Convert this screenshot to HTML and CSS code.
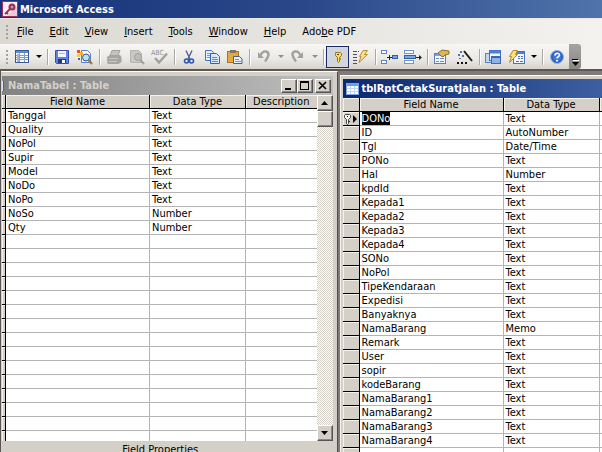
FILE: index.html
```html
<!DOCTYPE html>
<html lang="en">

<head>
    <meta charset="UTF-8">
    <meta name="viewport" content="width=device-width, initial-scale=1.0">
    <title>Microsoft Access</title>
    <link rel="stylesheet" href="styles.css">
</head>

<body>

    <header class="titlebar">
        <svg class="app-icon" width="16" height="16" viewBox="0 0 16 16">
            <rect x="0.5" y="0.5" width="15" height="15" fill="#f0c8d8" stroke="#a03060" />
            <path d="M1 1h14v4L5 15H1z" fill="#fff" opacity=".7" />
            <circle cx="10" cy="6" r="2.500" fill="#c890a8" stroke="#9c2c54" stroke-width="2" />
            <path d="M8 8l-5 5M4.500 11.500l1.500 1.500" stroke="#9c2c54" stroke-width="1.800" />
        </svg>
        <h1>Microsoft Access</h1>
    </header>

    <nav class="menubar">
        <span class="grip"></span>
        <button type="button"><u>F</u>ile</button>
        <button type="button"><u>E</u>dit</button>
        <button type="button"><u>V</u>iew</button>
        <button type="button"><u>I</u>nsert</button>
        <button type="button"><u>T</u>ools</button>
        <button type="button"><u>W</u>indow</button>
        <button type="button"><u>H</u>elp</button>
        <button type="button">Ado<u>b</u>e PDF</button>
    </nav>

    <div class="toolbar-row">
        <div class="toolbar">
            <span class="grip"></span>
            <button type="button" class="tool" aria-label="View">
                <svg width="16" height="16" viewBox="0 0 16 16">
                    <rect x="1.500" y="1.500" width="13" height="12" fill="#fff" stroke="#3a5a94" />
                    <path d="M2 2h12v2H2z" fill="#5f8ad0" />
                    <path d="M2 6.500h12M2 8.500h12M2 10.500h12M5.500 4v9M10.500 4v9" stroke="#7d9cc8" />
                    <path d="M3 5h2v8H3z" fill="#9db6da" />
                </svg>
            </button>
            <button type="button" class="drop" aria-label="View list"></button>
            <span class="sep"></span>
            <button type="button" class="tool" aria-label="Save">
                <svg width="16" height="16" viewBox="0 0 16 16">
                    <path d="M1.500 1.500h13v13h-12l-1-1z" fill="#5f82e4" stroke="#3a4eae" />
                    <rect x="4" y="2" width="8" height="6" fill="#f4f7ff" />
                    <path d="M5 4.500h6" stroke="#a9b9e0" />
                    <rect x="4" y="10" width="8" height="4" fill="#25347c" />
                    <rect x="8" y="11" width="3" height="3" fill="#fff" />
                </svg>
            </button>
            <button type="button" class="tool" aria-label="File Search">
                <svg width="17" height="16" viewBox="0 0 17 16">
                    <path d="M5.500 1.500h6l3 3v9h-9z" fill="#f4f8ff" stroke="#5b82c4" />
                    <path d="M1 1h3v3H1z" fill="#e0522c" />
                    <path d="M4 3h3v3H4z" fill="#f0b428" />
                    <path d="M1 5h3v3H1z" fill="#f0d040" />
                    <path d="M2 9h2v2H2z" fill="#3b62c0" />
                    <circle cx="10" cy="8.500" r="3.500" fill="#b9e0f4" stroke="#34558c" />
                    <path d="M12.500 11l3.500 4" stroke="#a8702c" stroke-width="2" />
                </svg>
            </button>
            <span class="sep"></span>
            <button type="button" class="tool" aria-label="Print" disabled>
                <svg width="16" height="16" viewBox="0 0 16 16">
                    <path d="M6 1.500h8l-2 5H4z" fill="#c4c3bf" stroke="#a4a3a0" />
                    <path d="M1 8l3-2h10l1.500 2v5l-3 2H1.500z" fill="#a6a5a2" />
                    <path d="M3 9.500h9M3 12.500h8" stroke="#c8c7c3" />
                </svg>
            </button>
            <button type="button" class="tool" aria-label="Print Preview" disabled>
                <svg width="16" height="16" viewBox="0 0 16 16">
                    <path d="M1.500 1.500h8l3 3v9h-11z" fill="#c9c8c5" stroke="#b4b3b0" />
                    <circle cx="9" cy="8" r="3.500" fill="#bdbcb9" stroke="#a2a19e" />
                    <path d="M11.500 11l3.500 4" stroke="#a2a19e" stroke-width="2" />
                </svg>
            </button>
            <button type="button" class="tool" aria-label="Spelling" disabled>
                <svg width="18" height="16" viewBox="0 0 18 16">
                    <text x="0" y="6" class="abc">ABC</text>
                    <path d="M4 9l4 4.500 8-9" fill="none" stroke="#a09f9c" stroke-width="2.400" />
                </svg>
            </button>
            <span class="sep"></span>
            <button type="button" class="tool" aria-label="Cut">
                <svg width="16" height="16" viewBox="0 0 16 16">
                    <path d="M5 1.500l4 8.500M11 1.500L7 10" stroke="#4c6498" stroke-width="1.400" />
                    <circle cx="5.500" cy="12" r="2" fill="none" stroke="#2d56b4" stroke-width="1.600" />
                    <circle cx="10.500" cy="12" r="2" fill="none" stroke="#2d56b4" stroke-width="1.600" />
                </svg>
            </button>
            <button type="button" class="tool" aria-label="Copy">
                <svg width="16" height="16" viewBox="0 0 16 16">
                    <path d="M1.500 1.500h6l2 2v8h-8z" fill="#e6f0ff" stroke="#4474c4" />
                    <path d="M3 4.500h4M3 6.500h3M3 8.500h3" stroke="#6d9ade" />
                    <path d="M6.500 4.500h6l3 3v7h-9z" fill="#dbe9ff" stroke="#3262b4" />
                    <path d="M8 8.500h5M8 10.500h6M8 12.500h6" stroke="#5b8ad6" />
                </svg>
            </button>
            <button type="button" class="tool" aria-label="Paste">
                <svg width="17" height="16" viewBox="0 0 17 16">
                    <rect x="1.500" y="2.500" width="11" height="11" fill="#e2ab42" stroke="#a87420" />
                    <path d="M4 1h6v3H4z" fill="#7d7763" />
                    <path d="M7.500 7.500h6l2.500 2.500v4.500H7.500z" fill="#e9f1ff" stroke="#4a5f88" />
                    <path d="M9 10.500h4M9 12.500h6" stroke="#7797c8" />
                </svg>
            </button>
            <span class="sep"></span>
            <button type="button" class="tool" aria-label="Undo" disabled>
                <svg width="16" height="16" viewBox="0 0 16 16">
                    <path d="M4 7c2-4 4-5 6-4.500 4 1 3 5-1 10" fill="none" stroke="#a2a19e" stroke-width="2.400" />
                    <path d="M2 3v6h6z" fill="#a2a19e" />
                </svg>
            </button>
            <button type="button" class="drop" aria-label="Undo list" disabled></button>
            <button type="button" class="tool" aria-label="Redo" disabled>
                <svg width="16" height="16" viewBox="0 0 16 16">
                    <path d="M11 7c-2-4-4-5-6-4.500-4 1-3 5 1 10" fill="none" stroke="#a2a19e" stroke-width="2.400" />
                    <path d="M13 3v6H7z" fill="#a2a19e" />
                </svg>
            </button>
            <button type="button" class="drop" aria-label="Redo list" disabled></button>
            <span class="sep"></span>
            <button type="button" class="tool pressed" aria-label="Primary Key" aria-pressed="true">
                <svg width="16" height="16" viewBox="0 0 16 16">
                    <path d="M5.500 3.500h5l1 1v2l-2 2v1h1v1h-1v2l-1 1-1-1v-4l-2-2v-2z" fill="#f8dc60" stroke="#94742c" />
                    <path d="M7 5h2v1H7z" fill="#5d4410" />
                </svg>
            </button>
            <button type="button" class="tool" aria-label="Indexes">
                <svg width="17" height="16" viewBox="0 0 17 16">
                    <path d="M1 2.500h6M1 5.500h5M1 8.500h5M1 11.500h5M1 14.500h4" stroke="#4f4d6c" stroke-dasharray="4 1" />
                    <path d="M11 1.500h4.500l-3 4h3L7 13.500l2-6H7.500z" fill="#fbe08a" stroke="#b98f38" />
                </svg>
            </button>
            <span class="sep"></span>
            <button type="button" class="tool" aria-label="Insert Rows">
                <svg width="17" height="16" viewBox="0 0 17 16">
                    <rect x="0.500" y="1.500" width="5" height="3" fill="#fff" stroke="#5c86c8" />
                    <rect x="0.500" y="11.500" width="5" height="3" fill="#fff" stroke="#5c86c8" />
                    <rect x="11.500" y="6.500" width="5" height="3" fill="#7ba6e4" stroke="#345ea8" />
                    <path d="M6 8.500h5M8.500 6v5" stroke="#222" />
                </svg>
            </button>
            <button type="button" class="tool" aria-label="Delete Rows">
                <svg width="18" height="16" viewBox="0 0 18 16">
                    <rect x="0.500" y="1.500" width="9" height="3" fill="#fff" stroke="#6e96d0" />
                    <rect x="0.500" y="6.500" width="11" height="3" fill="#7ba6e4" stroke="#345ea8" />
                    <rect x="0.500" y="11.500" width="9" height="3" fill="#fff" stroke="#6e96d0" />
                    <path d="M12 8.500h5" stroke="#222" />
                    <path d="M15 6l3 2.500-3 2.500z" fill="#222" />
                </svg>
            </button>
            <span class="sep"></span>
            <button type="button" class="tool" aria-label="Properties">
                <svg width="17" height="16" viewBox="0 0 17 16">
                    <rect x="1.500" y="4.500" width="11" height="10" fill="#f2f7ff" stroke="#5a80bc" />
                    <path d="M2 6h10" stroke="#7ba2dd" stroke-width="2" />
                    <path d="M3 9.500h3M7 9.500h4M3 12.500h3M7 12.500h4" stroke="#6b8dc4" />
                    <path d="M5 4l4-3 7 1v3l-4 1-2 2-2-1z" fill="#dcb94e" stroke="#8c7030" />
                </svg>
            </button>
            <button type="button" class="tool" aria-label="Build">
                <svg width="18" height="16" viewBox="0 0 18 16">
                    <path d="M8 2l8 10" stroke="#1c1c1c" stroke-width="2" />
                    <path d="M4 2h2v2H4zM2 5h2v2H2zM6 6h2v2H6zM3 9h2v1H3z" fill="#5b74a8" />
                    <path d="M1 13h2v2H1zM5 13h2v2H5zM9 13h2v2H9z" fill="#111" />
                </svg>
            </button>
            <span class="sep"></span>
            <button type="button" class="tool" aria-label="Database Window">
                <svg width="17" height="16" viewBox="0 0 17 16">
                    <rect x="0.500" y="4.500" width="10" height="9" fill="#bed6f6" stroke="#5a86c8" />
                    <rect x="4.500" y="1.500" width="11" height="10" fill="#eef5ff" stroke="#4574bc" />
                    <path d="M5 3h10" stroke="#4c80d4" stroke-width="3" />
                    <rect x="6.500" y="7.500" width="9" height="7" fill="#8fb3e8" stroke="#3e69b0" />
                    <path d="M7 8.500h8" stroke="#2f60b8" />
                </svg>
            </button>
            <button type="button" class="tool" aria-label="New Object">
                <svg width="18" height="16" viewBox="0 0 18 16">
                    <rect x="5.500" y="2.500" width="11" height="12" fill="#f2f7ff" stroke="#4e74b4" />
                    <path d="M6 4h10" stroke="#4c80d4" stroke-width="2" />
                    <path d="M10 7.500h2M13 7.500h2M10 9.500h2M13 9.500h2M8 12.500h3M12 12.500h3" stroke="#5078b8" />
                    <path d="M5 1.500h4.500l-2 4h2L1.500 13.500l2-6H1.500z" fill="#fbe07c" stroke="#b08a30" />
                </svg>
            </button>
            <button type="button" class="drop" aria-label="New Object list"></button>
            <span class="sep"></span>
            <button type="button" class="tool" aria-label="Help">
                <svg width="16" height="16" viewBox="0 0 16 16">
                    <circle cx="8" cy="8" r="6.500" fill="#3f78dc" stroke="#90aede" />
                    <circle cx="8" cy="8" r="5" fill="none" stroke="#2552ac" />
                    <path d="M6 6.500c0-3 4.500-3 4.500-.5C10.500 8 8 7.500 8 9.500" fill="none" stroke="#fff" stroke-width="1.600" />
                    <path d="M7 11h2v1.500H7z" fill="#fff" />
                </svg>
            </button>
            <button type="button" class="more" aria-label="Toolbar Options">
                <svg width="8" height="8" viewBox="0 0 8 8">
                    <path d="M1 1h6v1H1z" fill="#000" />
                    <path d="M1 4h7L4.500 8z" fill="#000" />
                    <path d="M2 2.500h6" stroke="#fff" />
                </svg>
            </button>
        </div>
    </div>

    <main class="workspace">

        <section class="window window-left">
            <div class="caption">
                <span class="icon-edge"></span>
                <h2>NamaTabel : Table</h2>
                <div class="caption-buttons">
                    <button type="button" aria-label="Minimize">
                        <svg width="10" height="10" viewBox="0 0 10 10"><path d="M1 7h6v2H1z" /></svg>
                    </button>
                    <button type="button" aria-label="Maximize">
                        <svg width="10" height="10" viewBox="0 0 10 10"><path d="M0 0h9v9H0zM1 2v6h7V2z" fill-rule="evenodd" /></svg>
                    </button>
                    <button type="button" class="close" aria-label="Close">
                        <svg width="10" height="10" viewBox="0 0 10 10"><path d="M1 1l7 7M8 1L1 8" stroke="#000" stroke-width="1.600" /></svg>
                    </button>
                </div>
            </div>
            <div class="sheet">
                <div class="grid-area">
                    <table>
                        <colgroup>
                            <col class="col-edge">
                            <col class="col-field">
                            <col class="col-type">
                            <col>
                        </colgroup>
                        <thead>
                            <tr>
                                <th></th>
                                <th>Field Name</th>
                                <th>Data Type</th>
                                <th>Description</th>
                            </tr>
                        </thead>
                        <tbody id="leftRows"></tbody>
                    </table>
                </div>
                <div class="scrollbar">
                    <button type="button" aria-label="Scroll up">
                        <svg width="7" height="4" viewBox="0 0 7 4"><path d="M0 4h7L3.500 0z" /></svg>
                    </button>
                    <div class="thumb"></div>
                    <button type="button" class="down" aria-label="Scroll down">
                        <svg width="7" height="4" viewBox="0 0 7 4"><path d="M0 0h7L3.500 4z" /></svg>
                    </button>
                </div>
            </div>
            <div class="properties">Field Properties</div>
        </section>

        <section class="window window-right">
            <div class="caption active">
                <svg width="14" height="12" viewBox="0 0 14 12">
                    <rect x="0.500" y="0.500" width="12" height="11" fill="#fff" stroke="#7ea6e4" />
                    <path d="M1 2h11" stroke="#6f9be6" stroke-width="2" />
                    <path d="M1 5.500h11M1 8.500h11M4.500 3v8M8.500 3v8" stroke="#c4d6f2" />
                </svg>
                <h2>tblRptCetakSuratJalan : Table</h2>
            </div>
            <div class="sheet">
                <div class="grid-area">
                    <table>
                        <colgroup>
                            <col class="col-selector">
                            <col class="col-field">
                            <col class="col-type">
                            <col>
                        </colgroup>
                        <thead>
                            <tr>
                                <th></th>
                                <th>Field Name</th>
                                <th>Data Type</th>
                                <th></th>
                            </tr>
                        </thead>
                        <tbody id="rightRows"></tbody>
                    </table>
                </div>
            </div>
        </section>

    </main>

    <script>
        const leftFields = [
            ["Tanggal", "Text"], ["Quality", "Text"], ["NoPol", "Text"],
            ["Supir", "Text"], ["Model", "Text"], ["NoDo", "Text"],
            ["NoPo", "Text"], ["NoSo", "Number"], ["Qty", "Number"]
        ];

        const rightFields = [
            ["DONo", "Text"], ["ID", "AutoNumber"], ["Tgl", "Date/Time"],
            ["PONo", "Text"], ["Hal", "Number"], ["kpdId", "Text"],
            ["Kepada1", "Text"], ["Kepada2", "Text"], ["Kepada3", "Text"],
            ["Kepada4", "Text"], ["SONo", "Text"], ["NoPol", "Text"],
            ["TipeKendaraan", "Text"], ["Expedisi", "Text"], ["Banyaknya", "Text"],
            ["NamaBarang", "Memo"], ["Remark", "Text"], ["User", "Text"],
            ["sopir", "Text"], ["kodeBarang", "Text"], ["NamaBarang1", "Text"],
            ["NamaBarang2", "Text"], ["NamaBarang3", "Text"], ["NamaBarang4", "Text"]
        ];

        // Key and arrow shown in the selector of the primary key row
        const keyIcon = `
            <svg width="15" height="12" viewBox="0 0 15 12">
                <path d="M2.500 1.500h4l1 1v2l-2 2v4l-1 1-1-1v-4l-2-2v-2z" fill="#f4f2ee" stroke="#444" />
                <path d="M4 3h1v1H4zM6 8h1v1H6z" fill="#222" />
                <path d="M10 2l4 4-4 4z" fill="#000" />
            </svg>`;

        // Fill a table body, padding it with empty rows up to the total
        function fillRows(id, fields, total, hasKey) {
            const body = document.getElementById(id);
            for (let i = 0; i < total; i++) {
                const field = fields[i] || ["", ""];
                const row = document.createElement("tr");
                const isKey = hasKey && i === 0;
                row.innerHTML = `
                    <td class="selector">${isKey ? keyIcon : ""}</td>
                    <td>${isKey ? `<mark>${field[0]}</mark>` : field[0]}</td>
                    <td>${field[1]}</td>
                    <td></td>`;
                body.appendChild(row);
            }
        }

        fillRows("leftRows", leftFields, 40, false);
        fillRows("rightRows", rightFields, 40, true);
    </script>
</body>

</html>
```
FILE: styles.css
```css
* {
    box-sizing: border-box;
}

body {
    margin: 0;
    height: 100vh;
    display: flex;
    flex-direction: column;
    overflow: hidden;
    font-family: "DejaVu Sans Condensed", "DejaVu Sans", sans-serif;
    font-size: 11px;
    line-height: 13px;
    color: #000;
    background: #807b79;
}

h1,
h2 {
    margin: 0;
    font-size: 11px;
    font-weight: bold;
    white-space: nowrap;
}

button {
    margin: 0;
    padding: 0;
    border: none;
    background: none;
    font: inherit;
    color: inherit;
}

svg {
    display: block;
    flex: none;
}

/* Application title and menus */
.titlebar {
    display: flex;
    align-items: center;
    gap: 2px;
    height: 18px;
    padding-left: 2px;
    color: #fff;
    background: linear-gradient(90deg, #17327a, #2a4889 50%, #5073ab);
}

.menubar {
    display: flex;
    align-items: center;
    height: 26px;
    padding-left: 6px;
    border-top: 1px solid #e8ebe4;
    background: linear-gradient(90deg, #dad8d1, #f3f2ef);
}

.menubar button {
    padding: 0 8px;
    white-space: nowrap;
}

.menubar .grip {
    margin-right: 1px;
}

.grip {
    flex: none;
    width: 2px;
    height: 14px;
    background: repeating-linear-gradient(#a3a19b 0 2px, transparent 2px 4px);
}

/* Toolbar */
.toolbar-row {
    display: flex;
    background: linear-gradient(90deg, #dad8d1, #f3f2ef);
}

.toolbar {
    display: flex;
    align-items: center;
    height: 25px;
    padding-left: 6px;
    border-radius: 0 3px 3px 0;
    overflow: hidden;
    background: linear-gradient(#f8f7f5, #ebe9e5 60%, #d6d3cb);
}

.toolbar .grip {
    margin-right: 2px;
}

.tool {
    flex: none;
    display: flex;
    align-items: center;
    justify-content: center;
    width: 23px;
    height: 22px;
}

.pressed {
    border: 1px solid #1c2c66;
    background: #d3d5dd;
}

.drop {
    flex: none;
    display: flex;
    justify-content: center;
    width: 11px;
}

.drop::before {
    content: "";
    border: 3px solid transparent;
    border-top-color: #000;
    border-bottom: none;
}

.drop:disabled::before {
    border-top-color: #8f8e8b;
}

.sep {
    flex: none;
    width: 6px;
    height: 16px;
    background: linear-gradient(90deg, transparent 3px, #aaa8a2 3px 4px, #fff 4px 5px, transparent 5px);
}

.more {
    flex: none;
    display: flex;
    align-items: flex-end;
    justify-content: center;
    width: 12px;
    height: 25px;
    margin-left: 1px;
    padding-bottom: 3px;
    background: linear-gradient(#a5a4a1, #8a8885);
}

.abc {
    font-size: 7px;
    fill: #8f8e8b;
}

/* Child windows */
.workspace {
    flex: 1;
    min-height: 0;
    display: grid;
    grid-template-columns: 56% 1fr;
    border-top: 2px solid #5c5755;
    border-left: 1px solid #5c5755;
}

.window {
    display: flex;
    flex-direction: column;
    min-width: 0;
    min-height: 0;
    background: #d4d0c8;
}

.window-left {
    padding: 4px 4px 0 1px;
    border-top: 1px solid #fff;
    border-right: 1px solid #504c4a;
}

.window-right {
    margin: 4px 0 0 2px;
    padding: 3px 0 0 2px;
    border-top: 1px solid #fff;
    border-left: 1px solid #f4f2ee;
}

.caption {
    flex: none;
    display: flex;
    align-items: center;
    gap: 4px;
    height: 19px;
    color: #d4d0c8;
    background: linear-gradient(90deg, #828282, #bfbfbf);
}

.caption.active {
    gap: 2px;
    padding-left: 3px;
    color: #fff;
    background: linear-gradient(90deg, #0c2870, #3d5fa0);
}

.icon-edge {
    width: 2px;
    height: 10px;
    background: #dce8fa;
    border-right: 1px solid #3a62a8;
}

.caption-buttons {
    display: flex;
    margin-left: auto;
    padding-right: 2px;
}

.caption-buttons button,
.scrollbar button,
.thumb {
    display: flex;
    align-items: center;
    justify-content: center;
    width: 16px;
    background: #d4d0c8;
    border: 1px solid #fff;
    border-right-color: #555;
    border-bottom-color: #555;
    box-shadow: inset -1px -1px #8c8983;
}

.caption-buttons button {
    height: 14px;
}

.caption-buttons .close {
    margin-left: 2px;
}

.sheet {
    flex: 1;
    min-height: 0;
    display: flex;
}

.grid-area {
    flex: 1;
    min-width: 0;
    overflow: hidden;
    background: #fff;
}

table {
    width: 100%;
    table-layout: fixed;
    border-collapse: separate;
    border-spacing: 0;
}

.col-edge {
    width: 4px;
}

.col-selector {
    width: 17px;
}

.col-field {
    width: 144px;
}

.col-type {
    width: 96px;
}

th,
td {
    height: 14px;
    padding: 0 0 0 2px;
    line-height: 13px;
    text-align: left;
    white-space: nowrap;
    border-right: 1px solid #b4b4b4;
    border-bottom: 1px solid #b4b4b4;
}

th {
    padding: 0;
    font-weight: normal;
    text-align: center;
    background: #d4d0c8;
    border-color: #000;
    box-shadow: inset 1px 1px #f4f2ee;
}

th:last-child,
td:last-child {
    border-right: none;
}

.selector {
    padding: 0;
    background: #d4d0c8;
    border-color: #000;
    box-shadow: inset 1px 1px #f4f2ee;
}

mark {
    display: inline-block;
    color: #fff;
    background: #000;
}

/* Scrollbar */
.scrollbar {
    display: flex;
    flex-direction: column;
    width: 16px;
    background: repeating-conic-gradient(#fff 0 25%, #d4d0c8 0 50%) 0 0 / 2px 2px;
}

.scrollbar button,
.thumb {
    flex: none;
    height: 16px;
}

.scrollbar .down {
    margin-top: auto;
}

.properties {
    flex: none;
    height: 11px;
    padding: 2px 14px 0 0;
    overflow: hidden;
    text-align: center;
}
```
